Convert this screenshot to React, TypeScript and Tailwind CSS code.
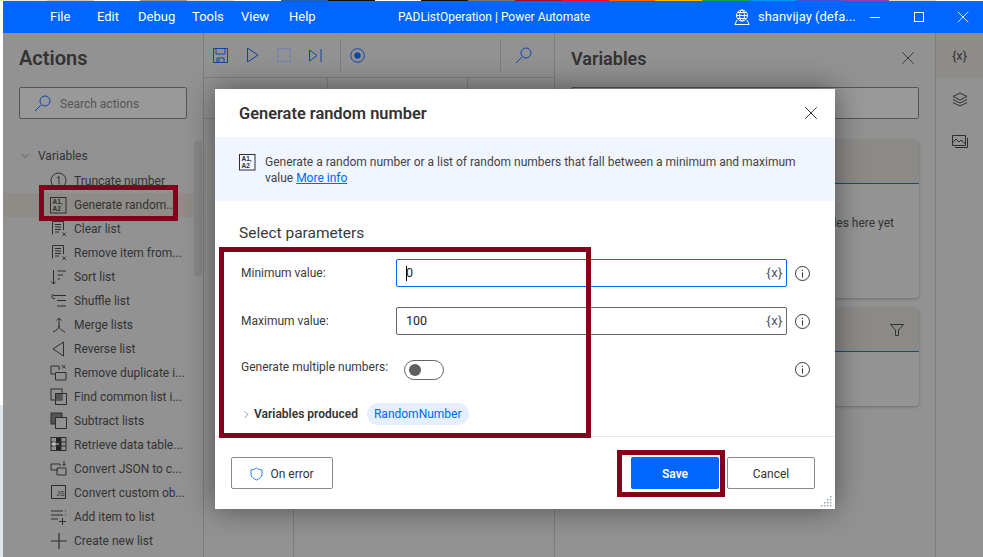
import { ChevronDown, ChevronRight, X } from "lucide-react";
import type { ReactNode } from "react";

const menu = [
  { label: "File", cls: "w-[47px]" },
  { label: "Edit", cls: "w-[41px]" },
  { label: "Debug", cls: "w-[54px]" },
  { label: "Tools", cls: "w-[49px]" },
  { label: "View", cls: "w-[48px]" },
  { label: "Help", cls: "w-[40px]" },
];

const strip = ["#e8e8e8", "#c8c8c8", "#ffffff", "#9a9a9a", "#dddddd", "#ffffff", "#2c5aa8", "#111111", "#ffffff", "#111111", "#777777", "#a0102a", "#e81123", "#f7630c", "#ffb900", "#16a34a", "#0099e5", "#4a52c8", "#8e44ad", "#dddddd", "#ffffff"];

function Ic({ children }: { children: ReactNode }) {
  return (
    <svg width="18" height="18" viewBox="0 0 18 18" fill="none" stroke="#2e2e2e" strokeWidth="1" className="shrink-0">
      {children}
    </svg>
  );
}

function A1A2({ color = "#2e2e2e" }: { color?: string }) {
  return (
    <svg width="17" height="17" viewBox="0 0 17 17" fill="none" className="shrink-0">
      <rect x="0.5" y="0.5" width="15.5" height="15.5" stroke={color} />
      <text x="2.5" y="7" fontSize="6.5" fontWeight="700" fill={color} fontFamily="Liberation Sans, sans-serif">A1,</text>
      <text x="2.5" y="14" fontSize="6.5" fontWeight="700" fill={color} fontFamily="Liberation Sans, sans-serif">A2</text>
    </svg>
  );
}

const listLines = (
  <>
    <path d="M2.5 14.5V1.5H13.5V10" />
    <path d="M5 4.5H11M5 7H11M5 9.5H11M5 12H9" />
    <path d="M12.5 12.5L16 16M16 12.5L12.5 16" />
  </>
);

const actions: { label: string; icon: ReactNode; active?: boolean }[] = [
  { label: "Truncate number", icon: <Ic><circle cx="8.5" cy="8.5" r="7.5" /><path d="M7 6L9 4.5V12.5" /></Ic> },
  { label: "Generate random...", icon: <A1A2 />, active: true },
  { label: "Clear list", icon: <Ic>{listLines}</Ic> },
  { label: "Remove item from...", icon: <Ic>{listLines}</Ic> },
  { label: "Sort list", icon: <Ic><path d="M3.5 2V16M1 13.5L3.5 16L6 13.5" /><path d="M7.5 3H16M7.5 7H13M7.5 11H10" /></Ic> },
  { label: "Shuffle list", icon: <Ic><path d="M7 3.5H3L1.5 5L3 6.5H5M3 2L1.5 3.5" /><path d="M6 3.5H16M7 8.5H16M7 14H16" /></Ic> },
  { label: "Merge lists", icon: <Ic><path d="M9 2V9C9 13 6 14.5 3 16M9 9C9 13 12 14.5 15 16M6.5 4.5L9 2L11.5 4.5" /></Ic> },
  { label: "Reverse list", icon: <Ic><path d="M13.5 2V16L3 9Z" /></Ic> },
  { label: "Remove duplicate i...", icon: <Ic><path d="M9 6V2H1V10H5" /><path d="M5.5 8.5H16V16H5.5Z" /><path d="M12 1L15.5 4.5M15.5 1L12 4.5" /></Ic> },
  { label: "Find common list i...", icon: <Ic><rect x="1" y="1" width="11" height="11" /><rect x="5.5" y="5.5" width="11" height="11" /><rect x="6" y="6" width="5.5" height="5.5" fill="#555" stroke="none" /></Ic> },
  { label: "Subtract lists", icon: <Ic><rect x="1" y="1" width="11" height="11" fill="#555" /><rect x="5.5" y="5.5" width="11" height="11" fill="#929292" /></Ic> },
  { label: "Retrieve data table...", icon: <Ic><rect x="1" y="1.5" width="15" height="13" /><rect x="6" y="2" width="5" height="12" fill="#222" stroke="none" /><path d="M1 6H16M1 10H16M11 2V14" /><path d="M9 8H2.5M5 5.5L2.5 8L5 10.5" stroke="#cfcfcf" /></Ic> },
  { label: "Convert JSON to c...", icon: <Ic><path d="M8 10H1V4H10V6" /><path d="M7 8H16V15H7Z" /><path d="M14 1V5.5M12.5 4L14 5.5L15.5 4" /></Ic> },
  { label: "Convert custom ob...", icon: <Ic><rect x="1.5" y="1.5" width="14" height="13" /><text x="6.5" y="12" fontSize="7" fill="#2e2e2e" stroke="none" fontFamily="Liberation Sans, sans-serif">JS</text></Ic> },
  { label: "Add item to list", icon: <Ic><path d="M1 3H13M1 7H13M1 11H8M15 3H16M15 7H16" /><path d="M12.5 10V17M9 13.5H16" /></Ic> },
  { label: "Create new list", icon: <Ic><path d="M9 1V17M1 9H17" strokeWidth="1.2" /></Ic> },
];

function VarButton() {
  return <span className="text-[13px] text-[#555] tracking-[0.5px]">{"{x}"}</span>;
}

function InfoIcon() {
  return (
    <svg width="15" height="15" viewBox="0 0 15 15" fill="none" stroke="#333" className="shrink-0">
      <circle cx="7.5" cy="7.5" r="7" />
      <path d="M7.5 6.5V11.5M7.5 3.8V5" />
    </svg>
  );
}

function ToolIcons() {
  return (
    <div className="flex items-center h-[45px] border-b border-[#7d7d7d] pl-[9px]">
      <svg width="15" height="15" viewBox="0 0 15 15" fill="none" stroke="#0f47a8" className="mr-[17px]">
        <path d="M.5.5H14.5V14.5H.5Z" /><path d="M3 .5V6H12V.5M4 14.5V10H11V14.5M6 14V11" />
      </svg>
      <svg width="15" height="16" viewBox="0 0 15 16" fill="none" stroke="#0f47a8" className="mr-[17px]">
        <path d="M2.5 1V15L13 8Z" />
      </svg>
      <div className="w-[14px] h-[14px] border border-[#6f87ad] mr-[18px]" />
      <svg width="13" height="13" viewBox="0 0 13 13" fill="none" stroke="#0f47a8" className="mr-[18px]">
        <path d="M.5 1V12L8 6.5Z" /><path d="M12 0V13" />
      </svg>
      <div className="w-px h-[32px] bg-[#7d7d7d] mr-[9px]" />
      <svg width="15" height="15" viewBox="0 0 15 15" fill="none" stroke="#0f47a8" className="mr-[135px]">
        <circle cx="7.5" cy="7.5" r="6.8" /><circle cx="7.5" cy="7.5" r="3.2" fill="#0f47a8" stroke="none" />
      </svg>
      <div className="w-px h-[32px] bg-[#7d7d7d] mr-[14px]" />
      <svg width="17" height="17" viewBox="0 0 17 17" fill="none" stroke="#0f47a8">
        <circle cx="11" cy="6" r="5" /><path d="M7.5 9.5L1 16" />
      </svg>
    </div>
  );
}

function Field({ label, value, focused }: { label: string; value: string; focused?: boolean }) {
  return (
    <div className="flex items-center h-[28px]">
      <div className="w-[155px] text-[#3a3a3a]">{label}</div>
      <div className={`flex items-center justify-between w-[391px] h-full rounded-[2px] border px-[9px] pr-[3px] ${focused ? "border-[#0066ff]" : "border-[#666]"}`}>
        <span className="flex items-center text-[#222] text-[12.5px]">
          {focused && <span className="w-px h-[15px] bg-black -mr-px" />}
          {value}
        </span>
        <VarButton />
      </div>
      <div className="ml-[8px]"><InfoIcon /></div>
    </div>
  );
}

export default function App() {
  return (
    <div className="relative w-[983px] h-[557px] overflow-hidden bg-white text-[12px]" style={{ fontFamily: "Roboto, sans-serif" }}>
      {/* desktop behind the window */}
      <div className="flex h-px">
        {strip.map((c, i) => (
          <div key={i} className="flex-1" style={{ background: c }} />
        ))}
      </div>
      <div className="flex h-[556px]">
        <div className="w-[3px] flex flex-col">
          <div className="flex-1 bg-white" />
          <div className="h-[152px] bg-[#dfe6f0]" />
        </div>
        <div className="flex-1 flex flex-col min-w-0">
          {/* title bar */}
          <div className="flex items-center h-[32px] bg-[#0066ff] text-white text-[13px] shrink-0">
            <div className="flex ml-[47px] w-[348px]">
              {menu.map((m) => (
                <span key={m.label} className={m.cls}>{m.label}</span>
              ))}
            </div>
            <span className="w-[336px] text-[12px]">PADListOperation | Power Automate</span>
            <svg width="16" height="16" viewBox="0 0 16 16" fill="none" stroke="#fff" className="shrink-0">
              <circle cx="8" cy="6.5" r="5.5" />
              <ellipse cx="8" cy="6.5" rx="2.4" ry="5.5" />
              <path d="M2.5 6.5H13.5M3.5 3.5H12.5M3.5 9.5H12.5" />
              <path d="M3 11L.8 15.5H15.2L13 11" />
            </svg>
            <span className="ml-[8px] w-[112px] whitespace-nowrap">shanvijay (defa...</span>
            <div className="w-[10px] h-px bg-white" />
            <div className="ml-[34px] w-[10px] h-[10px] border border-white" />
            <div className="ml-[29px]"><X size={20} strokeWidth={1} /></div>
          </div>

          <div className="flex-1 flex bg-[#929292] text-[#333] min-h-0">
            {/* actions panel */}
            <aside className="relative w-[201px] shrink-0 border-r border-[#7d7d7d]">
              <h2 className="ml-[16px] mt-[10px] text-[20px] font-semibold leading-[30px]">Actions</h2>
              <div className="flex items-center ml-[16px] mt-[14px] w-[168px] h-[32px] border border-[#555] rounded-[2px] bg-[#999] pl-[14px]">
                <svg width="17" height="17" viewBox="0 0 17 17" fill="none" stroke="#0f47a8" className="shrink-0">
                  <circle cx="11" cy="6" r="5" /><path d="M7.5 9.5L1 16" />
                </svg>
                <span className="ml-[9px] text-[#555] mt-[2px]">Search actions</span>
              </div>
              <div className="flex items-center ml-[16px] mt-[26px] h-[22px]">
                <ChevronDown size={12} strokeWidth={1.2} />
                <span className="ml-[7px]">Variables</span>
              </div>
              <div className="mt-[2px]">
                {actions.map((a) => (
                  <div key={a.label} className={`flex items-center h-[24px] pl-[47px] ${a.active ? "bg-[#8f8c88]" : ""}`}>
                    <div className="w-[24px]">{a.icon}</div>
                    <span className="whitespace-nowrap">{a.label}</span>
                  </div>
                ))}
              </div>
              <div className="absolute left-[191px] top-[108px] w-[8px] h-[135px] rounded bg-[#868686]" />
            </aside>

            {/* flow designer */}
            <main className="w-[351px] shrink-0 border-r border-[#7d7d7d] flex flex-col">
              <ToolIcons />
              <div className="flex h-[41px] border-b border-[#7d7d7d] shrink-0">
                <div className="w-[124px] border-r border-[#7d7d7d]" />
                <div className="w-[140px] border-r border-[#7d7d7d]" />
              </div>
              <div className="flex-1 flex">
                <div className="w-[90px] border-r border-[#7d7d7d]" />
              </div>
            </main>

            {/* variables panel */}
            <section className="flex-1 min-w-0 px-[16px]">
              <div className="flex items-center justify-between h-[30px] mt-[10px]">
                <h2 className="text-[18px] font-semibold">Variables</h2>
                <X size={22} strokeWidth={1} />
              </div>
              <div className="h-[32px] mt-[14px] border border-[#555] rounded-[2px] bg-[#999]" />
              <div className="h-[158px] mt-[21px] rounded bg-[#949494] shadow-[0_1px_3px_rgba(0,0,0,0.25)]">
                <div className="h-[44px] bg-[#8c8a87] border-b border-[#0f47a8] rounded-t" />
                <div className="mt-[30px] pr-[25px] text-right">There aren't any input variables here yet</div>
              </div>
              <div className="h-[98px] mt-[10px] rounded bg-[#949494] shadow-[0_1px_3px_rgba(0,0,0,0.25)]">
                <div className="flex items-center justify-end h-[44px] pr-[15px] bg-[#8c8a87] border-b border-[#0f47a8] rounded-t">
                  <svg width="14" height="12" viewBox="0 0 14 12" fill="none" stroke="#333">
                    <path d="M.5.5H13.5L8.5 6V11.5H5.5V6Z" />
                  </svg>
                </div>
              </div>
            </section>

            {/* right rail */}
            <nav className="w-[48px] shrink-0 border-l border-[#7d7d7d] flex flex-col items-center">
              <div className="flex items-center justify-center self-stretch h-[45px] bg-[#8f8d8a] text-[13px]">{"{x}"}</div>
              <div className="mt-[14px]">
                <svg width="16" height="16" viewBox="0 0 16 16" fill="none" stroke="#2e2e2e">
                  <path d="M8 1L15 4.5L8 8L1 4.5Z" /><path d="M1 7.5L8 11L15 7.5M1 10.5L8 14L15 10.5" />
                </svg>
              </div>
              <div className="mt-[27px]">
                <svg width="16" height="15" viewBox="0 0 16 15" fill="none" stroke="#2e2e2e">
                  <path d="M.5.5H13.5V10.5H.5Z" /><path d="M15.5 3V12.5H3M.5 8L4 4L7 7L9 5L13.5 9" />
                </svg>
              </div>
            </nav>
          </div>
        </div>
      </div>

      {/* dialog */}
      <div className="absolute left-[215px] top-[89px] w-[620px] h-[420px] flex flex-col bg-white text-[#3a3a3a] shadow-[0_0_28px_rgba(0,0,0,0.45)]">
        <div className="flex items-center justify-between h-[48px] pl-[24px] pr-[13px] shrink-0">
          <h1 className="text-[16.4px] font-semibold text-[#333] mt-[3px]">Generate random number</h1>
          <X size={22} strokeWidth={1} className="text-[#222]" />
        </div>
        <div className="flex h-[64px] bg-[#f0f5ff] pl-[24px] pt-[17px] shrink-0">
          <A1A2 />
          <p className="ml-[9px] w-[540px] leading-[16px] text-[#444]">
            Generate a random number or a list of random numbers that fall between a minimum and maximum value{" "}
            <span className="text-[#0066ff] underline">More info</span>
          </p>
        </div>
        <h2 className="ml-[24px] mt-[21px] text-[15.5px] leading-[22px]">Select parameters</h2>
        <div className="ml-[26px] mt-[15px] flex flex-col gap-[20px]">
          <Field label="Minimum value:" value="0" focused />
          <Field label="Maximum value:" value="100" />
        </div>
        <div className="flex items-center ml-[26px] mt-[25px] h-[20px]">
          <span className="w-[163px] whitespace-nowrap -mt-[6px]">Generate multiple numbers:</span>
          <div className="flex items-center w-[40px] h-[20px] border border-[#666] rounded-full pl-[4px]">
            <div className="w-[12px] h-[12px] rounded-full bg-[#5f5f5f]" />
          </div>
          <div className="ml-[351px] -mt-[2px]"><InfoIcon /></div>
        </div>
        <div className="flex items-center ml-[26px] mt-[23px] h-[22px]">
          <ChevronRight size={11} strokeWidth={1.2} />
          <span className="ml-[2px] font-semibold text-[#333]">Variables produced</span>
          <span className="ml-[9px] flex items-center h-[22px] px-[7px] rounded-full bg-[#e5f0ff] text-[#0066ff]">RandomNumber</span>
        </div>
        <div className="flex-1" />
        <div className="relative flex items-center justify-between h-[73px] border-t border-[#e8e8e8] pl-[16px] pr-[20px] shrink-0">
          <button className="flex items-center justify-center gap-[7px] w-[102px] h-[32px] pt-[1px] border border-[#8a8a8a] rounded-[2px] text-[#333]">
            <svg width="13" height="14" viewBox="0 0 13 14" fill="none" stroke="#2f7fff">
              <path d="M6.5 1C8 2.2 10 2.8 12 2.8V7C12 10 9.5 12 6.5 13C3.5 12 1 10 1 7V2.8C3 2.8 5 2.2 6.5 1Z" />
            </svg>
            On error
          </button>
          <div className="flex gap-[8px]">
            <button className="w-[88px] h-[32px] pt-[1px] rounded-[2px] bg-[#0066ff] text-white font-semibold">Save</button>
            <button className="w-[88px] h-[32px] pt-[1px] border border-[#8a8a8a] rounded-[2px] text-[#333]">Cancel</button>
          </div>
          <svg width="12" height="12" viewBox="0 0 12 12" fill="#9aa3b5" className="absolute right-[2px] bottom-[2px]">
            <rect x="9" y="1" width="1.5" height="1.5" /><rect x="6" y="4" width="1.5" height="1.5" /><rect x="9" y="4" width="1.5" height="1.5" />
            <rect x="3" y="7" width="1.5" height="1.5" /><rect x="6" y="7" width="1.5" height="1.5" /><rect x="9" y="7" width="1.5" height="1.5" />
            <rect x="0" y="10" width="1.5" height="1.5" /><rect x="3" y="10" width="1.5" height="1.5" /><rect x="6" y="10" width="1.5" height="1.5" /><rect x="9" y="10" width="1.5" height="1.5" />
          </svg>
        </div>
      </div>

      {/* red annotation boxes */}
      <div className="absolute left-[39px] top-[185px] w-[139px] h-[36px] border-[5px] border-[#85001a]" />
      <div className="absolute left-[219px] top-[247px] w-[372px] h-[191px] border-[5px] border-[#85001a]" />
      <div className="absolute left-[617px] top-[450px] w-[108px] h-[47px] border-[5px] border-[#85001a]" />
    </div>
  );
}
